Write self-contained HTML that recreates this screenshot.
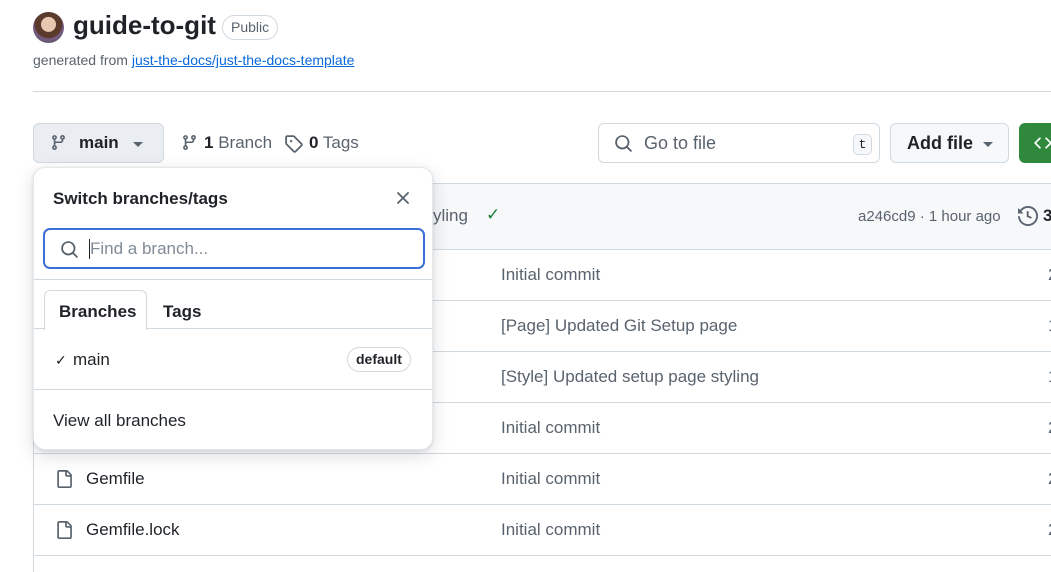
<!DOCTYPE html>
<html><head><meta charset="utf-8"><style>
*{box-sizing:border-box;margin:0;padding:0}
html,body{width:1051px;height:572px;overflow:hidden}
body{background:#fff;font-family:"Liberation Sans",sans-serif;color:#1f2328;position:relative}
.a{position:absolute}
.row{position:absolute;left:33px;width:1030px;height:51px;border-top:1px solid #d1d9e0}
.row .n{position:absolute;left:53px;top:15px;font-size:17px}
.row .m{position:absolute;left:468px;top:15px;font-size:17px;color:#59636e}
.row .d{position:absolute;left:1015px;top:15px;font-size:17px;color:#59636e}
.row svg{position:absolute;left:22px;top:16px}
</style></head><body>
<div class="a" style="left:33px;top:12px;width:31px;height:31px;border-radius:50%;background:radial-gradient(circle at 50% 40%,#e8c6b0 0 30%,#5a3a2a 32% 55%,#7a5a8a 60%,#3a5a3a 100%)"></div>
<div class="a" style="left:73px;top:10px;font-size:26px;font-weight:bold;color:#1f2328">guide-to-git</div>
<div class="a" style="left:222px;top:15px;height:25px;padding:0 8px;border:1px solid #d1d9e0;border-radius:13px;font-size:14px;line-height:23px;color:#59636e">Public</div>
<div class="a" style="left:33px;top:52px;font-size:14px;color:#59636e">generated from <span style="color:#0969da;text-decoration:underline">just-the-docs/just-the-docs-template</span></div>
<div class="a" style="left:33px;top:91px;width:1018px;height:1px;background:#d1d9e0"></div>

<div class="a" style="left:33px;top:123px;width:131px;height:40px;background:#eaeef2;border:1px solid #d1d9e0;border-radius:6px"></div>
<svg class="a" style="left:50px;top:134px" width="17" height="17" viewBox="0 0 16 16" fill="#59636e"><path d="M9.5 3.25a2.25 2.25 0 1 1 3 2.122V6A2.5 2.5 0 0 1 10 8.5H6a1 1 0 0 0-1 1v1.128a2.251 2.251 0 1 1-1.5 0V5.372a2.25 2.25 0 1 1 1.5 0v1.836A2.493 2.493 0 0 1 6 7h4a1 1 0 0 0 1-1v-.628A2.25 2.25 0 0 1 9.5 3.25Zm-6 0a.75.75 0 1 0 1.5 0 .75.75 0 0 0-1.5 0Zm8.25-.75a.75.75 0 1 0 0 1.5.75.75 0 0 0 0-1.5ZM4.25 12a.75.75 0 1 0 0 1.5.75.75 0 0 0 0-1.5Z"/></svg>
<div class="a" style="left:79px;top:133px;font-size:17px;font-weight:bold">main</div>
<div class="a" style="left:133px;top:142px;border-left:5px solid transparent;border-right:5px solid transparent;border-top:5px solid #59636e"></div>
<svg class="a" style="left:181px;top:134px" width="17" height="17" viewBox="0 0 16 16" fill="#59636e"><path d="M9.5 3.25a2.25 2.25 0 1 1 3 2.122V6A2.5 2.5 0 0 1 10 8.5H6a1 1 0 0 0-1 1v1.128a2.251 2.251 0 1 1-1.5 0V5.372a2.25 2.25 0 1 1 1.5 0v1.836A2.493 2.493 0 0 1 6 7h4a1 1 0 0 0 1-1v-.628A2.25 2.25 0 0 1 9.5 3.25Zm-6 0a.75.75 0 1 0 1.5 0 .75.75 0 0 0-1.5 0Zm8.25-.75a.75.75 0 1 0 0 1.5.75.75 0 0 0 0-1.5ZM4.25 12a.75.75 0 1 0 0 1.5.75.75 0 0 0 0-1.5Z"/></svg>
<div class="a" style="left:204px;top:133px;font-size:17px;color:#59636e"><b style="color:#1f2328">1</b> Branch</div>
<svg class="a" style="left:284px;top:134px" width="19" height="19" viewBox="0 0 16 16" fill="#59636e"><path d="M1 7.775V2.75C1 1.784 1.784 1 2.75 1h5.025c.464 0 .91.184 1.238.513l6.25 6.25a1.75 1.750 0 0 1 0 2.474l-5.026 5.026a1.75 1.75 0 0 1-2.474 0l-6.25-6.25A1.752 1.752 0 0 1 1 7.775Zm1.5 0c0 .066.026.13.073.177l6.250 6.25a.25.25 0 0 0 .354 0l5.025-5.025a.25.25 0 0 0 0-.354l-6.25-6.25a.25.25 0 0 0-.177-.073H2.75a.25.25 0 0 0-.25.25ZM6 5a1 1 0 1 1 0 2 1 1 0 0 1 0-2Z"/></svg>
<div class="a" style="left:309px;top:133px;font-size:17px;color:#59636e"><b style="color:#1f2328">0</b> Tags</div>

<div class="a" style="left:598px;top:123px;width:282px;height:40px;border:1px solid #d1d9e0;border-radius:6px"></div>
<svg class="a" style="left:614px;top:134px" width="19" height="19" viewBox="0 0 16 16" fill="#59636e"><path d="M10.68 11.74a6 6 0 0 1-7.922-8.982 6 6 0 0 1 8.982 7.922l3.04 3.04a.749.749 0 1 1-1.06 1.06ZM11.5 7a4.499 4.499 0 1 0-8.997 0A4.499 4.499 0 0 0 11.5 7Z"/></svg>
<div class="a" style="left:644px;top:133px;font-size:18px;color:#59636e">Go to file</div>
<div class="a" style="left:853px;top:134px;width:19px;height:21px;border:1px solid #d1d9e0;border-radius:5px;background:#f6f8fa;font-family:'Liberation Mono',monospace;font-size:13px;text-align:center;line-height:19px">t</div>
<div class="a" style="left:890px;top:123px;width:119px;height:40px;border:1px solid #d1d9e0;border-radius:6px;background:#f6f8fa"></div>
<div class="a" style="left:907px;top:133px;font-size:18px;font-weight:bold">Add file</div>
<div class="a" style="left:983px;top:142px;border-left:5px solid transparent;border-right:5px solid transparent;border-top:5px solid #59636e"></div>
<div class="a" style="left:1019px;top:123px;width:50px;height:40px;border-radius:6px;background:#2f883b"></div>
<svg class="a" style="left:1034px;top:134px" width="18" height="18" viewBox="0 0 16 16" fill="#fff"><path d="m11.28 3.22 4.25 4.25a.75.75 0 0 1 0 1.06l-4.25 4.25a.749.749 0 0 1-1.275-.326.749.749 0 0 1 .215-.734L13.94 8l-3.72-3.72a.749.749 0 0 1 .326-1.275.749.749 0 0 1 .734.215Zm-6.56 0a.751.751 0 0 1 1.042.018.751.751 0 0 1 .018 1.042L2.06 8l3.72 3.72a.749.749 0 0 1-.326 1.275.749.749 0 0 1-.734-.215L.47 8.53a.75.75 0 0 1 0-1.06Z"/></svg>

<div class="a" style="left:33px;top:183px;width:1030px;height:400px;border:1px solid #d1d9e0;border-radius:6px"></div>
<div class="a" style="left:34px;top:184px;width:1020px;height:65px;background:#f6f8fa;border-radius:6px 0 0 0"></div>
<div class="a" style="left:433px;top:206px;font-size:17px;color:#59636e">yling</div>
<div class="a" style="left:486px;top:205px;font-size:17px;color:#1a7f37">✓</div>
<div class="a" style="left:858px;top:208px;font-size:15px;color:#59636e">a246cd9 · 1 hour ago</div>
<svg class="a" style="left:1018px;top:206px" width="20" height="20" viewBox="0 0 16 16" fill="#59636e"><path d="m.427 1.927 1.215 1.215a8.002 8.002 0 1 1-1.6 5.685.75.75 0 1 1 1.493-.154 6.5 6.5 0 1 0 1.18-4.458l1.358 1.358A.25.25 0 0 1 3.896 6H.25A.25.25 0 0 1 0 5.75V2.104a.25.25 0 0 1 .427-.177ZM7.75 4a.75.75 0 0 1 .75.75v2.992l2.028.812a.75.75 0 0 1-.557 1.392l-2.5-1A.751.751 0 0 1 7 8.25v-3.5A.75.75 0 0 1 7.75 4Z"/></svg>
<div class="a" style="left:1043px;top:206px;font-size:17px;font-weight:bold">3</div>

<div class="row" style="top:249px"><div class="m">Initial commit</div><div class="d">2</div></div>
<div class="row" style="top:300px"><div class="m">[Page] Updated Git Setup page</div><div class="d">1</div></div>
<div class="row" style="top:351px"><div class="m">[Style] Updated setup page styling</div><div class="d">1</div></div>
<div class="row" style="top:402px"><div class="m">Initial commit</div><div class="d">2</div></div>
<div class="row" style="top:453px"><svg width="18" height="18" viewBox="0 0 16 16" fill="#59636e"><path d="M2 1.75C2 .784 2.784 0 3.75 0h6.586c.464 0 .909.184 1.237.513l2.914 2.914c.329.328.513.773.513 1.237v9.586A1.75 1.75 0 0 1 13.25 16h-9.5A1.75 1.75 0 0 1 2 14.25Zm1.75-.25a.25.25 0 0 0-.25.25v12.5c0 .138.112.25.25.25h9.5a.25.25 0 0 0 .25-.25V6h-2.750A1.75 1.75 0 0 1 9 4.25V1.5Zm6.75.062V4.25c0 .138.112.25.25.25h2.688l-.011-.013-2.914-2.914-.013-.011Z"/></svg><div class="n">Gemfile</div><div class="m">Initial commit</div><div class="d">2</div></div>
<div class="row" style="top:504px"><svg width="18" height="18" viewBox="0 0 16 16" fill="#59636e"><path d="M2 1.75C2 .784 2.784 0 3.75 0h6.586c.464 0 .909.184 1.237.513l2.914 2.914c.329.328.513.773.513 1.237v9.586A1.75 1.75 0 0 1 13.25 16h-9.5A1.75 1.75 0 0 1 2 14.25Zm1.75-.25a.25.25 0 0 0-.25.25v12.5c0 .138.112.25.25.25h9.5a.25.25 0 0 0 .25-.25V6h-2.75A1.75 1.75 0 0 1 9 4.25V1.5Zm6.75.062V4.25c0 .138.112.25.25.25h2.688l-.011-.013-2.914-2.914-.013-.011Z"/></svg><div class="n">Gemfile.lock</div><div class="m">Initial commit</div><div class="d">2</div></div>
<div class="row" style="top:555px"><svg width="18" height="18" viewBox="0 0 16 16" fill="#59636e"><path d="M2 1.75C2 .784 2.784 0 3.75 0h6.586c.464 0 .909.184 1.237.513l2.914 2.914c.329.328.513.773.513 1.237v9.586A1.75 1.75 0 0 1 13.25 16h-9.5A1.75 1.75 0 0 1 2 14.25Z"/></svg></div>

<div class="a" style="left:33px;top:167px;width:400px;height:283px;background:#fff;border:1px solid #e4e8ec;border-radius:12px;box-shadow:0 6px 18px rgba(37,41,46,.15),0 1px 3px rgba(37,41,46,.12);overflow:hidden">
  <div class="a" style="left:19px;top:21px;font-size:17px;font-weight:bold">Switch branches/tags</div>
  <svg class="a" style="left:362px;top:23px" width="14" height="14" viewBox="0 0 14 14" stroke="#59636e" stroke-width="1.8" stroke-linecap="round"><path d="M2 2L12 12M12 2L2 12"/></svg>
  <div class="a" style="left:9px;top:60px;width:382px;height:41px;border:2px solid #3b6fd8;border-radius:7px"></div>
  <svg class="a" style="left:26px;top:72px" width="19" height="19" viewBox="0 0 16 16" fill="#59636e"><path d="M10.68 11.74a6 6 0 0 1-7.922-8.982 6 6 0 0 1 8.982 7.922l3.04 3.04a.749.749 0 1 1-1.06 1.06ZM11.5 7a4.499 4.499 0 1 0-8.997 0A4.499 4.499 0 0 0 11.5 7Z"/></svg>
  <div class="a" style="left:55px;top:71px;width:1px;height:20px;background:#1f2328"></div>
  <div class="a" style="left:56px;top:71px;font-size:17px;color:#818b98">Find a branch...</div>
  <div class="a" style="left:0;top:111px;width:400px;height:1px;background:#d1d9e0"></div>
  <div class="a" style="left:0;top:160px;width:400px;height:1px;background:#d1d9e0"></div>
  <div class="a" style="left:10px;top:122px;width:103px;height:40px;border:1px solid #d1d9e0;border-bottom:none;border-radius:6px 6px 0 0;background:#fff"></div>
  <div class="a" style="left:25px;top:134px;font-size:17px;font-weight:bold">Branches</div>
  <div class="a" style="left:129px;top:134px;font-size:17px;font-weight:bold">Tags</div>
  <div class="a" style="left:21px;top:184px;font-size:14px">✓</div>
  <div class="a" style="left:39px;top:182px;font-size:17px">main</div>
  <div class="a" style="left:313px;top:179px;height:25px;padding:0 8px;border:1px solid #d1d9e0;border-radius:13px;font-size:14px;line-height:23px;font-weight:bold;color:#1f2328">default</div>
  <div class="a" style="left:0;top:221px;width:400px;height:1px;background:#d1d9e0"></div>
  <div class="a" style="left:19px;top:243px;font-size:17px">View all branches</div>
</div>
</body></html>
